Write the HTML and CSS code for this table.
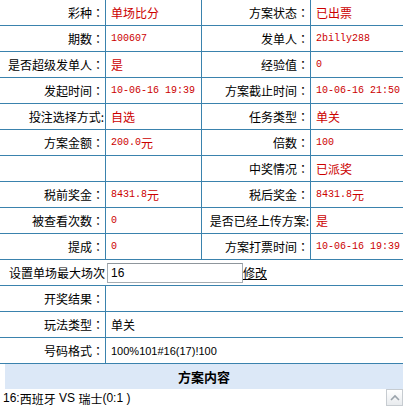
FILE: index.html
```html
<!DOCTYPE html>
<html lang="zh">
<head>
<meta charset="utf-8">
<title>方案详情</title>
<link rel="stylesheet" href="styles.css">
</head>
<body>
<div class="sheet">
  <div class="lab">彩种：</div><div class="val red">单场比分</div>
  <div class="lab">方案状态：</div><div class="val red last">已出票</div>

  <div class="lab">期数：</div><div class="val red"><span class="num">100607</span></div>
  <div class="lab">发单人：</div><div class="val red last"><span class="num">2billy288</span></div>

  <div class="lab">是否超级发单人：</div><div class="val red">是</div>
  <div class="lab">经验值：</div><div class="val red last"><span class="num">0</span></div>

  <div class="lab">发起时间：</div><div class="val red"><span class="num">10-06-16 19:39</span></div>
  <div class="lab">方案截止时间：</div><div class="val red last"><span class="num">10-06-16 21:50</span></div>

  <div class="lab">投注选择方式:</div><div class="val red">自选</div>
  <div class="lab">任务类型：</div><div class="val red last">单关</div>

  <div class="lab">方案金额：</div><div class="val red"><span class="num">200.0</span>元</div>
  <div class="lab">倍数：</div><div class="val red last"><span class="num">100</span></div>

  <div class="lab"></div><div class="val"></div>
  <div class="lab">中奖情况：</div><div class="val red last">已派奖</div>

  <div class="lab">税前奖金：</div><div class="val red"><span class="num">8431.8</span>元</div>
  <div class="lab">税后奖金：</div><div class="val red last"><span class="num">8431.8</span>元</div>

  <div class="lab">被查看次数：</div><div class="val red"><span class="num">0</span></div>
  <div class="lab">是否已经上传方案:</div><div class="val red last">是</div>

  <div class="lab">提成：</div><div class="val red"><span class="num">0</span></div>
  <div class="lab">方案打票时间：</div><div class="val red last"><span class="num">10-06-16 19:39</span></div>

  <div class="lab open">设置单场最大场次</div>
  <div class="val wide last setting"><input class="box" type="text" value="16"><a class="link" href="#">修改</a></div>

  <div class="lab">开奖结果：</div><div class="val wide last"></div>
  <div class="lab">玩法类型：</div><div class="val wide last">单关</div>
  <div class="lab">号码格式：</div><div class="val wide last"><span class="latin">100%101#16(17)!100</span></div>
</div>
<div class="band">方案内容</div>
<div class="content"><span class="latin">16:</span>西班牙<span class="latin"> VS </span>瑞士<span class="latin">(0:1 )</span></div>
<a class="totop" href="#" aria-label="top"><svg width="10" height="7" viewBox="0 0 10 7"><path d="M1 6 L5 2 L9 6" fill="none" stroke="#9aa3ab" stroke-width="1.6"/></svg></a>
</body>
</html>
```
FILE: styles.css
```css
html, body {
  margin: 0;
  padding: 0;
  background: #fff;
}
body {
  width: 403px;
  height: 406px;
  overflow: hidden;
  font-family: "Noto Sans CJK SC", sans-serif;
  font-size: 12px;
  color: #000;
}
.sheet {
  display: grid;
  grid-template-columns: 106px 96px 109px 92px;
  grid-auto-rows: 26px;
}
.lab, .val {
  box-sizing: border-box;
  border-right: 1px solid #3a82ad;
  border-bottom: 1px solid #3a82ad;
  display: flex;
  align-items: center;
  white-space: nowrap;
  overflow: hidden;
}
.lab {
  justify-content: flex-end;
  padding-right: 1px;
  font-family: "Noto Sans CJK JP", "Noto Sans CJK SC", sans-serif;
  font-feature-settings: "locl" 0;
  text-spacing-trim: space-all;
}
.val {
  padding-left: 5px;
}
.last {
  border-right: none;
}
.wide {
  grid-column: span 3;
}
.open {
  border-right: none;
}
.red {
  color: #cc0000;
}
.num {
  font-family: "Liberation Mono", monospace;
  font-size: 10px;
}
.latin {
  font-family: "Liberation Sans", sans-serif;
  font-size: 11px;
}
.setting {
  padding-left: 1px;
}
.box {
  box-sizing: border-box;
  width: 136px;
  height: 20px;
  margin: 0;
  padding: 0 3px;
  border: 1px solid #a5acb2;
  border-top-color: #8f969c;
  font-family: "Liberation Sans", sans-serif;
  font-size: 12px;
  color: #000;
  background: #fff;
}
.link {
  color: #000;
  text-decoration: underline;
}
.band {
  margin-left: 5px;
  height: 25px;
  background: #dce8f7;
  display: flex;
  align-items: center;
  justify-content: center;
  font-weight: bold;
  font-size: 13px;
}
.content {
  height: 18px;
  padding-left: 3px;
  display: flex;
  align-items: center;
  white-space: pre;
  font-size: 12px;
}
.content .latin {
  font-size: 12px;
}
.totop {
  position: fixed;
  right: 0;
  bottom: 0;
  width: 17px;
  height: 17px;
  box-sizing: border-box;
  border: 1px solid #c7ccd1;
  background: linear-gradient(#ffffff, #e8ebee);
  display: flex;
  align-items: center;
  justify-content: center;
}
```
